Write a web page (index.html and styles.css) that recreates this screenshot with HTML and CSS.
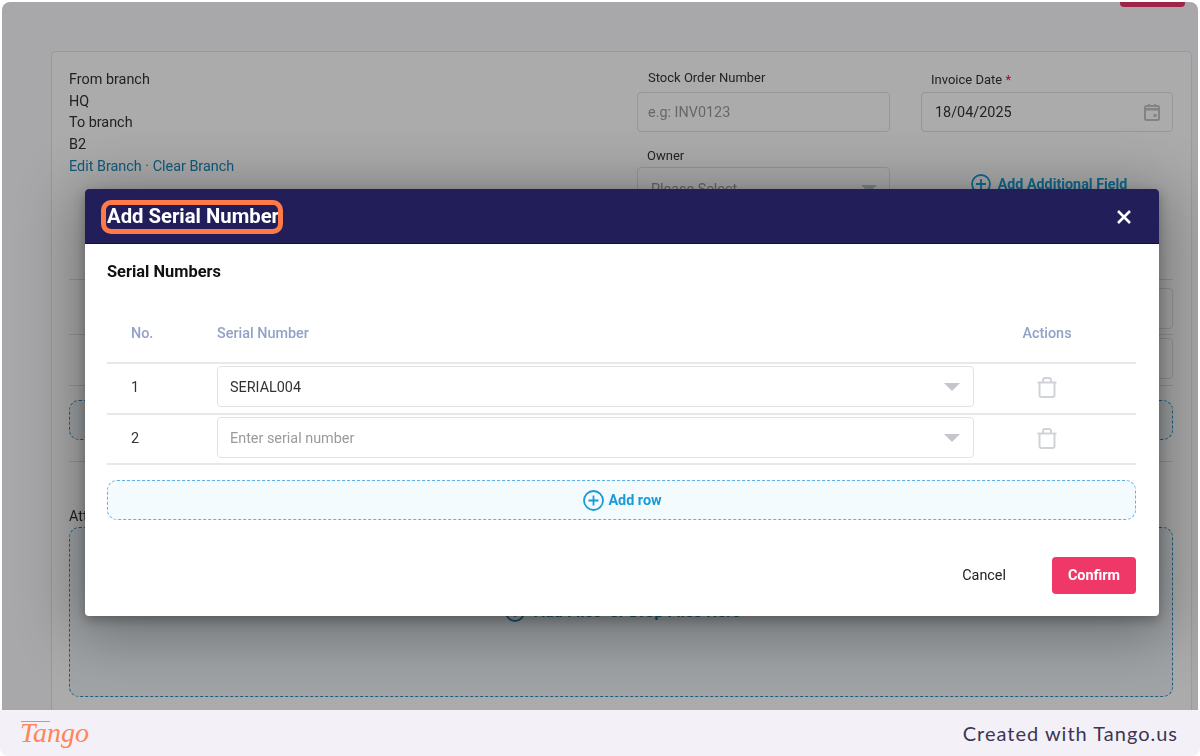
FILE: index.html
```html
<!DOCTYPE html>
<html lang="en">
<head>
  <meta charset="UTF-8" />
  <title>Add Serial Number</title>
  <link rel="stylesheet" href="styles.css">
</head>
<body>

<div class="shot">
  <section class="page">
    <div class="top-btn"></div>

    <div class="card">
      <div class="head-grid">
        <div class="branch">
          <div>From branch</div>
          <div>HQ</div>
          <div>To branch</div>
          <div>B2</div>
          <div class="link">Edit Branch · Clear Branch</div>
        </div>
        <div class="fields">
          <div class="field">
            <label class="lbl lbl-stock">Stock Order Number</label>
            <div class="box box-stock"><span class="ph">e.g: INV0123</span></div>
          </div>
          <div class="field">
            <label class="lbl lbl-date">Invoice Date <b>*</b></label>
            <div class="box">
              <span>18/04/2025</span>
              <svg class="cal" width="16" height="18" viewBox="0 0 16 18"><path d="M1 4.500a1.500 1.500 0 0 1 1.500-1.500h11a1.500 1.500 0 0 1 1.500 1.500v11a1.500 1.500 0 0 1-1.500 1.500h-11a1.500 1.500 0 0 1-1.500-1.500z" fill="none" stroke="#c4c4c8" stroke-width="2"/><path d="M1 5h14v2.500H1zM4 1h2v3H4zM10 1h2v3h-2zM9.500 11h3v3h-3z" fill="#c4c4c8"/></svg>
            </div>
          </div>
          <div class="field">
            <label class="lbl">Owner</label>
            <div class="box box-select"><span class="ph">Please Select</span><i class="caret"></i></div>
          </div>
          <div class="add-field">
            <svg width="20" height="20" viewBox="0 0 20 20"><circle cx="10" cy="10" r="9" fill="none" stroke="#1a9bd8" stroke-width="1.800"/><path d="M10 5v10M5 10h10" stroke="#1a9bd8" stroke-width="1.800"/></svg>
            <span>Add Additional Field</span>
          </div>
        </div>
      </div>

      <div class="line-row line-row-a"><div class="small-box"></div></div>
      <div class="line-row line-row-b"><div class="small-box"></div></div>
      <div class="sep"></div>
      <div class="dash dash-row"></div>
      <div class="sep sep-low"></div>
      <div class="attach">Attachments</div>
      <div class="dash dash-files">
        <svg width="20" height="20" viewBox="0 0 20 20"><circle cx="10" cy="10" r="9" fill="none" stroke="#1c86b8" stroke-width="1.800"/><path d="M10 5v10M5 10h10" stroke="#1c86b8" stroke-width="1.800"/></svg>
        <span>Add Files&nbsp; or Drop Files Here</span>
      </div>
    </div>

    <div class="overlay">
      <div class="modal">
        <div class="modal-head">
          <h2 class="modal-title">Add Serial Number</h2>
          <svg class="close" width="16" height="16" viewBox="0 0 16 16"><path d="M2 2l12 12M14 2L2 14" stroke="#fff" stroke-width="2.600"/></svg>
        </div>
        <div class="modal-body">
          <h3 class="section-title">Serial Numbers</h3>

          <div class="row row-head">
            <div class="col-no">No.</div>
            <div class="col-serial">Serial Number</div>
            <div class="col-act">Actions</div>
          </div>
          <div class="row">
            <div class="col-no">1</div>
            <div class="select"><span>SERIAL004</span><i class="caret"></i></div>
            <div class="col-act">
              <svg class="trash" width="20" height="21" viewBox="0 0 20 21"><path d="M.5 5.500h19M6 5.500V3a2 2 0 0 1 2-2h4a2 2 0 0 1 2 2v2.500M2.500 5.500V18a2 2 0 0 0 2 2h11a2 2 0 0 0 2-2V5.500" fill="none" stroke="#d0d3d8" stroke-width="2"/></svg>
            </div>
          </div>
          <div class="row row-last">
            <div class="col-no">2</div>
            <div class="select"><span class="ph">Enter serial number</span><i class="caret"></i></div>
            <div class="col-act">
              <svg class="trash" width="20" height="21" viewBox="0 0 20 21"><path d="M.5 5.500h19M6 5.500V3a2 2 0 0 1 2-2h4a2 2 0 0 1 2 2v2.500M2.500 5.500V18a2 2 0 0 0 2 2h11a2 2 0 0 0 2-2V5.500" fill="none" stroke="#d0d3d8" stroke-width="2"/></svg>
            </div>
          </div>

          <div class="add-row">
            <svg width="21" height="21" viewBox="0 0 21 21"><circle cx="10.500" cy="10.500" r="9.500" fill="none" stroke="#1a9bd8" stroke-width="1.800"/><path d="M10.500 5.500v10M5.500 10.500h10" stroke="#1a9bd8" stroke-width="1.800"/></svg>
            <span>Add row</span>
          </div>

          <div class="modal-foot">
            <span class="cancel">Cancel</span>
            <span class="confirm">Confirm</span>
          </div>
        </div>
      </div>
    </div>
  </section>

  <footer class="tango">
    <span class="tango-logo">Tango</span>
    <span class="tango-note">Created with Tango.us</span>
  </footer>
</div>

</body>
</html>
```

FILE: styles.css
```css
html, body {
  margin: 0; padding: 0;
  width: 1200px; height: 756px;
  overflow: hidden;
  background: #fff;
  font-family: Roboto, "Liberation Sans", sans-serif;
  color: #333;
}
.shot {
  height: 756px;
  display: flex;
  flex-direction: column;
}

.page {
  position: relative;
  flex: 1;
  margin: 2px 2px 0;
  padding: 49px 6px 0 49px;
  overflow: hidden;
  background: #fbfbfe;
  border-radius: 8px 8px 0 0;
  filter: blur(.4px);
}
.top-btn {
  position: absolute;
  top: -20px;
  right: 13px;
  width: 65px;
  height: 25px;
  background: #ef3768;
  border-radius: 4px;
}

.card {
  height: 700px;
  padding: 17px 18px 0 17px;
  background: #fff;
  border: 1px solid #e6e6e6;
  border-radius: 4px;
  box-sizing: border-box;
  font-size: 14.400px;
}
.head-grid {
  display: flex;
  justify-content: space-between;
  height: 210px;
}
.branch { line-height: 21.500px; }
.link { margin-top: 1px; color: #1c86b8; }

.fields {
  width: 536px;
  margin-top: -1px;
  display: grid;
  grid-template-columns: 253px 252px;
  column-gap: 31px;
  row-gap: 14px;
  align-content: start;
}
.lbl {
  display: block;
  height: 24px;
  padding-left: 10px;
  font-size: 13px;
  line-height: 20px;
}
.lbl-stock { padding-left: 11px; line-height: 20px; }
.lbl-date { line-height: 24px; }
.lbl b { color: #e5173f; font-weight: 400; }
.box {
  display: flex;
  align-items: center;
  justify-content: space-between;
  height: 40px;
  padding: 0 12px 0 13px;
  border: 1px solid #e2e2e2;
  border-radius: 4px;
  box-sizing: border-box;
}
.box-stock { padding-left: 10px; }
.box-select { height: 44px; margin-top: -3px; }
.ph { color: #9a9a9a; }
.caret {
  width: 0; height: 0;
  border-left: 8.500px solid transparent;
  border-right: 8.500px solid transparent;
  border-top: 8px solid #c4c6cb;
}
.add-field {
  display: flex;
  align-items: center;
  justify-content: center;
  gap: 7px;
  margin-top: 23px;
  padding-left: 4px;
  height: 30px;
  color: #1a9bd8;
  font-size: 14.300px;
  font-weight: 700;
}

.line-row {
  border-top: 1px solid #e2e2e2;
  display: flex;
  justify-content: flex-end;
  align-items: flex-start;
  box-sizing: border-box;
}
.line-row-a { height: 55px; padding-top: 8px; }
.line-row-b { height: 51px; padding-top: 3px; }
.small-box {
  width: 200px;
  height: 39px;
  border: 1px solid #e2e2e2;
  border-radius: 4px;
}
.sep { height: 1px; background: #e2e2e2; }
.sep-low { margin-top: 21px; }
.dash {
  border: 1px dashed #2a8cc4;
  border-radius: 10px;
  background: #eff5f8;
  box-sizing: border-box;
}
.dash-row { height: 40px; margin-top: 14px; }
.attach { margin: 45px 0 1px; height: 19px; line-height: 19px; }
.dash-files {
  height: 170px;
  display: flex;
  align-items: center;
  justify-content: center;
  gap: 9px;
  padding-left: 4px;
  color: #1c86b8;
  font-size: 15.500px;
  font-weight: 700;
  letter-spacing: .3px;
}

.overlay {
  position: absolute;
  inset: 0;
  padding: 187px 0 0 83px;
  background: rgba(0, 0, 0, .33);
}
.modal {
  width: 1074px;
  height: 427px;
  background: #fff;
  border-radius: 4px;
  box-shadow: 0 10px 60px 10px rgba(0, 0, 0, .32), 0 4px 12px rgba(0, 0, 0, .28);
}
.modal-head {
  display: flex;
  align-items: center;
  justify-content: space-between;
  height: 55px;
  padding: 0 27px 0 22px;
  box-sizing: border-box;
  background: #211e5a;
  border-bottom: 1px solid #0f0c46;
  border-radius: 4px 4px 0 0;
}
.modal-title {
  position: relative;
  margin: 0;
  color: #fff;
  font-size: 20.300px;
  font-weight: 700;
  line-height: 24px;
}
/* tango highlight over the heading */
.modal-title::after {
  content: "";
  position: absolute;
  left: -6px; right: -4px; top: -4px; bottom: -6px;
  border: 5px solid #ff7a47;
  border-radius: 10px;
}
.close { margin-top: 2px; }
.modal-body { padding: 18px 23px 0 22px; }
.section-title {
  margin: 0;
  height: 19px;
  font-size: 16.400px;
  font-weight: 700;
  line-height: 19px;
  color: #111;
}

.row {
  display: grid;
  grid-template-columns: 110px 757px 1fr;
  align-items: center;
  height: 51px;
  padding-bottom: 4px;
  border-bottom: 2px solid #e8e8e8;
  box-sizing: border-box;
  font-size: 14.400px;
}
.row-last { height: 50px; padding-bottom: 3px; }
.row-head {
  height: 70px;
  margin-top: 13px;
  padding: 10px 0 0;
  color: #93a1c6;
  font-weight: 500;
}
.col-no { padding-left: 24px; padding-top: 1px; }
.col-act {
  display: flex;
  justify-content: center;
  padding-right: 16px;
}
.trash { margin-top: 2px; }
.select {
  display: flex;
  align-items: center;
  justify-content: space-between;
  height: 41px;
  padding: 1px 13px 0 12px;
  border: 1px solid #e2e2e2;
  border-radius: 4px;
  box-sizing: border-box;
}
.add-row {
  display: flex;
  align-items: center;
  justify-content: center;
  gap: 4px;
  height: 40px;
  margin-top: 15px;
  padding-left: 2px;
  background: #f3fbff;
  border: 1px dashed #5fb0e8;
  border-radius: 10px;
  box-sizing: border-box;
  color: #1a9bd8;
  font-size: 14.400px;
  font-weight: 700;
}
.modal-foot {
  display: flex;
  align-items: center;
  justify-content: flex-end;
  gap: 46px;
  margin-top: 37px;
  font-size: 14.400px;
}
.cancel { color: #222; }
.confirm {
  width: 84px;
  height: 37px;
  background: #ef3768;
  border-radius: 4px;
  color: #fff;
  font-weight: 700;
  text-align: center;
  line-height: 37px;
}

.tango {
  height: 46px;
  display: flex;
  align-items: center;
  justify-content: space-between;
  padding: 0 22px 0 20px;
  background: #f3f1f7;
  border-radius: 0 0 8px 8px;
}
.tango-logo {
  position: relative;
  color: #ff8558;
  font-family: "Liberation Serif", serif;
  font-style: italic;
  font-size: 28px;
  font-weight: 400;
}
/* long bar of the T in the wordmark */
.tango-logo::before {
  content: "";
  position: absolute;
  left: 1px; top: 4px;
  width: 29px; height: 1px;
  background: #ff8558;
}
.tango-note {
  color: #3d3555;
  font-family: Lato, sans-serif;
  font-size: 20px;
  letter-spacing: 1px;
}
```
